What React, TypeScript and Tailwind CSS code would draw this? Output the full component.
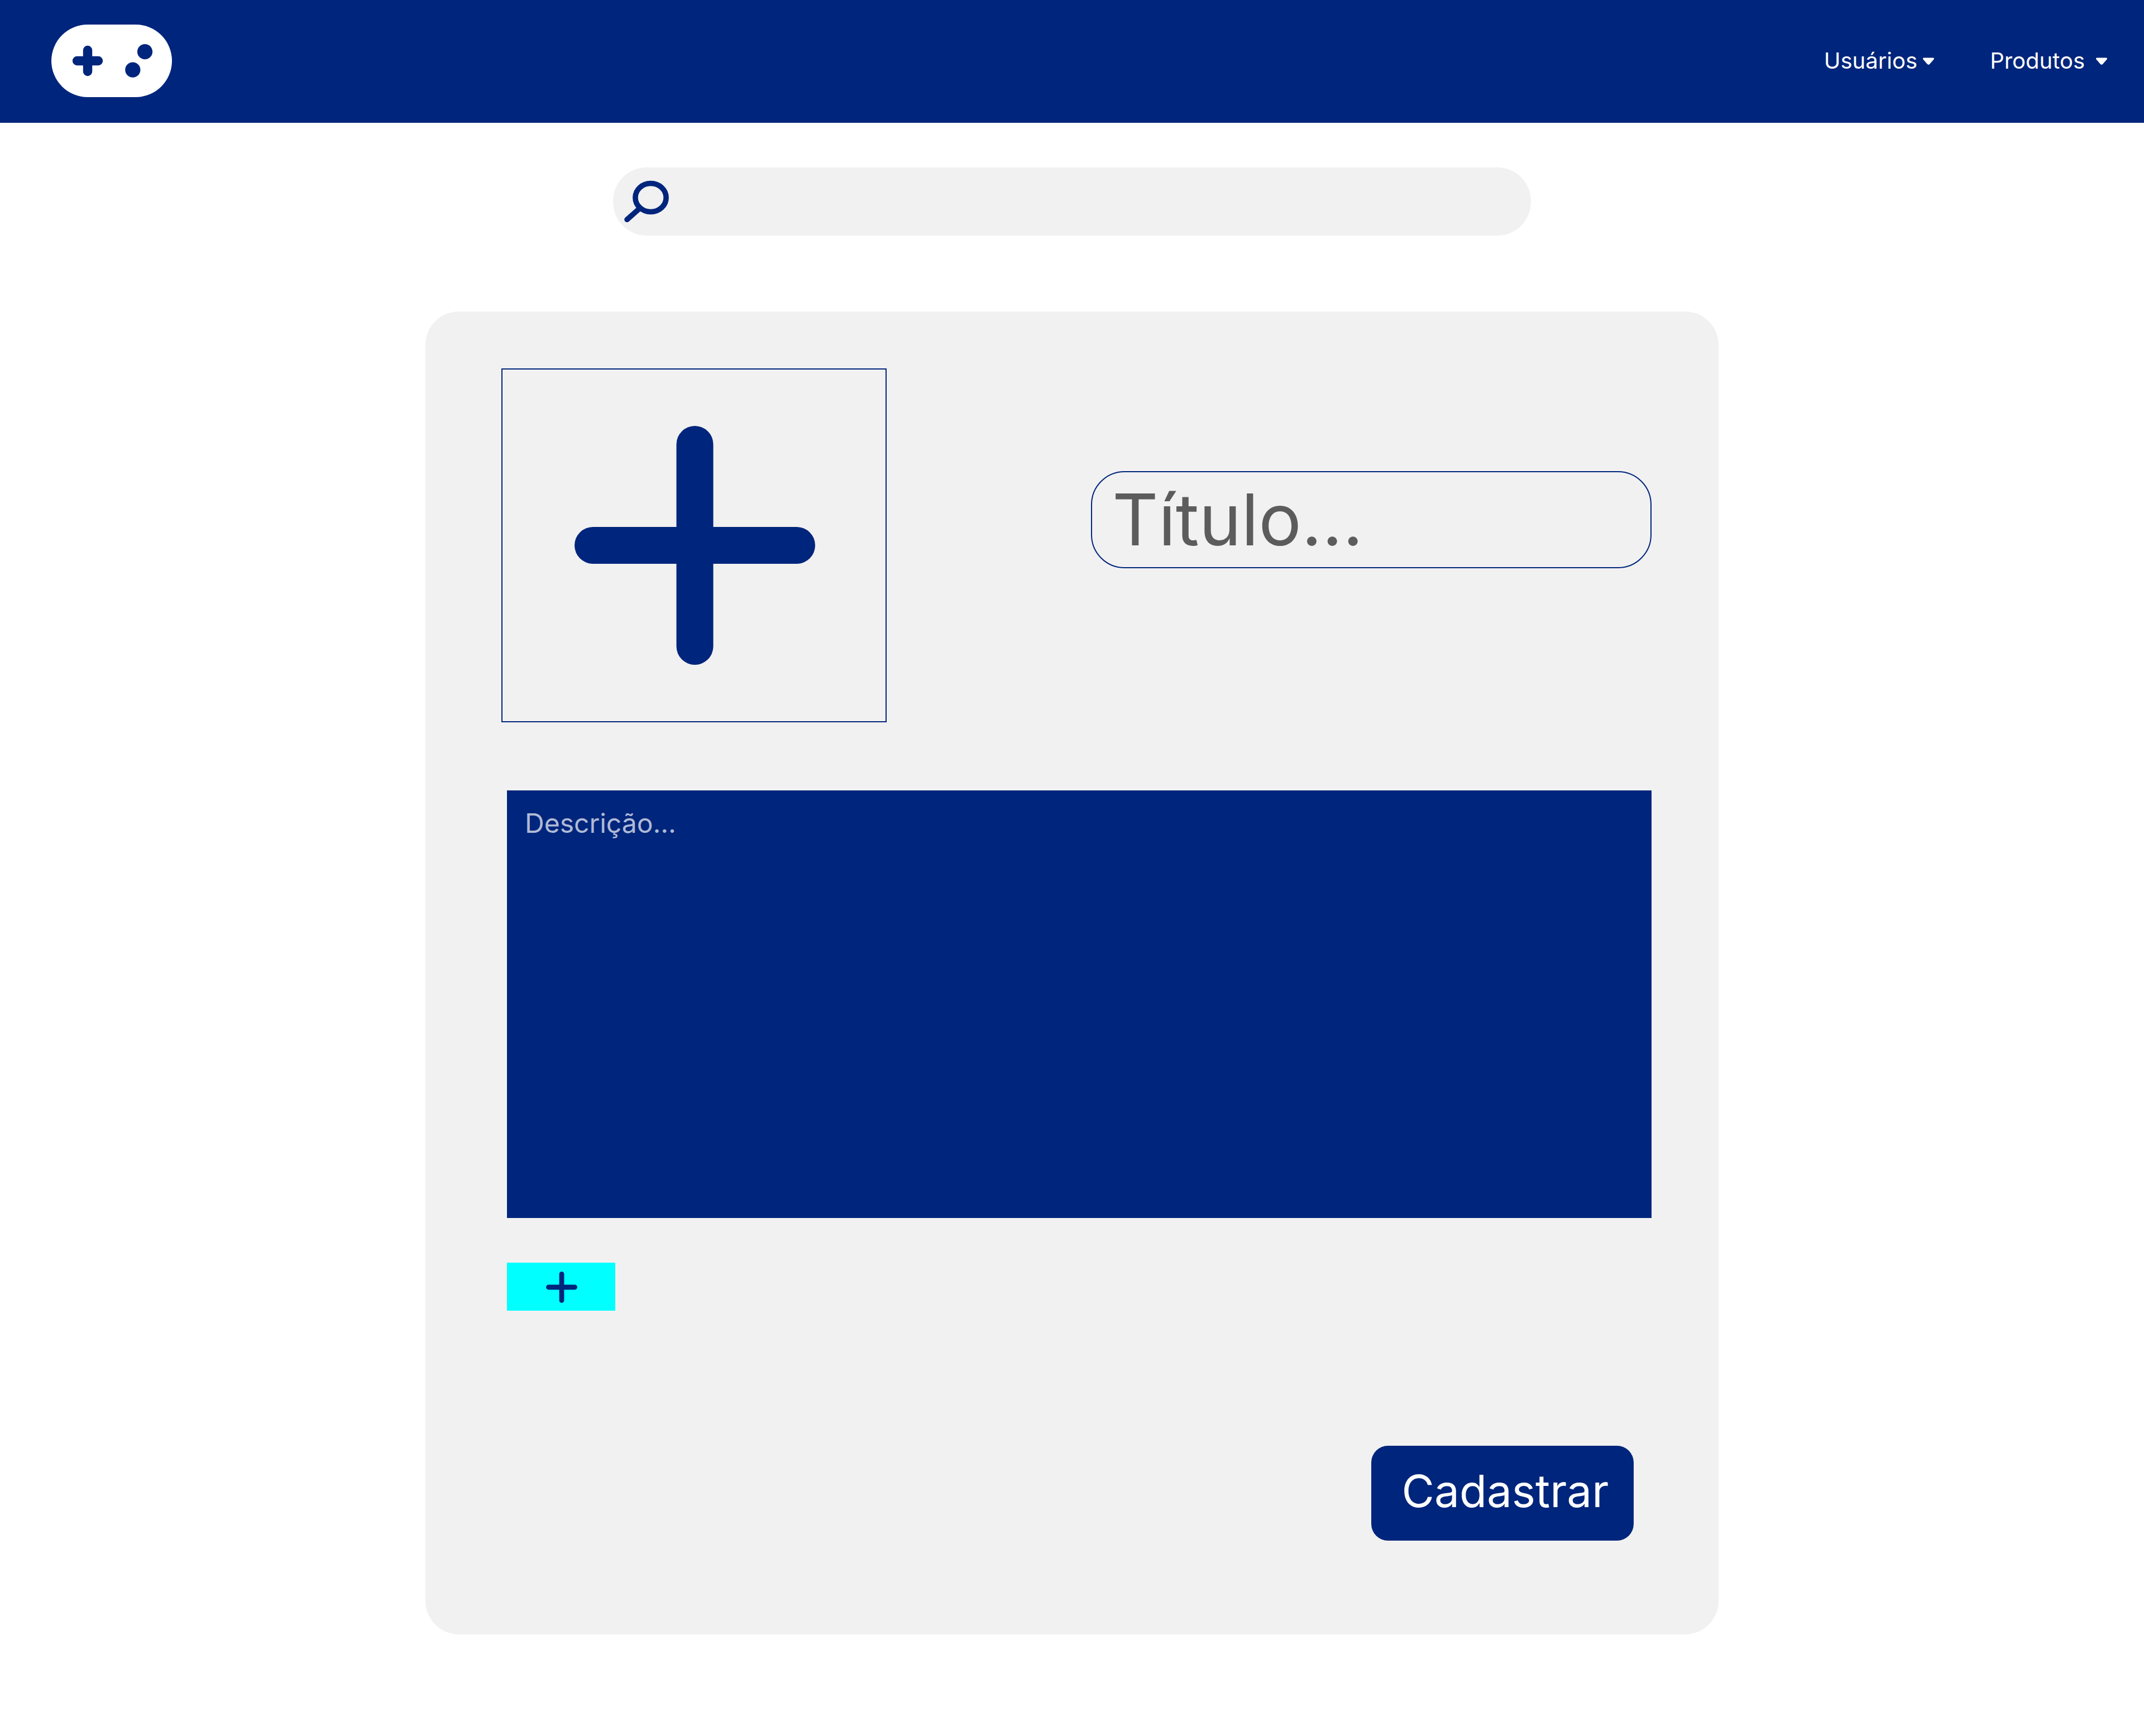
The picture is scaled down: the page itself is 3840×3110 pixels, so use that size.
import React from "react";

function GamepadLogo() {
  return (
    <svg className="h-[130px] w-[216px]" viewBox="0 0 216 130" aria-hidden="true">
      <rect width="216" height="130" rx="65" fill="#ffffff" />
      <path d="M46 65H84M65 46V84" stroke="#00257c" strokeWidth="16.4" strokeLinecap="round" />
      <circle cx="167.5" cy="48.7" r="13.6" fill="#00257c" />
      <circle cx="145.8" cy="81.2" r="13.6" fill="#00257c" />
    </svg>
  );
}

function Caret() {
  return (
    <svg className="h-4 w-5" viewBox="0 0 20 16" aria-hidden="true">
      <path
        d="M1.2 2.4H18.8Q20.2 2.8 19.8 5L12.2 13.8Q10 16 7.8 13.8L0.2 5Q-0.2 2.8 1.2 2.4Z"
        fill="#ffffff"
      />
    </svg>
  );
}

function SearchIcon() {
  return (
    <svg className="h-[76px] w-[82px] shrink-0" viewBox="0 0 82 76" fill="none" stroke="#00257c" aria-hidden="true">
      <ellipse cx="48.5" cy="32" rx="27.6" ry="25.5" strokeWidth="9.6" />
      <path d="M6 71.3L29 51" strokeWidth="9.6" strokeLinecap="round" />
    </svg>
  );
}

function LargePlus() {
  return (
    <svg className="h-[428px] w-[431px]" viewBox="0 0 431 428" fill="#00257c" aria-hidden="true">
      <rect x="182.5" width="66" height="428" rx="33" />
      <rect y="181" width="431" height="66" rx="33" />
    </svg>
  );
}

function SmallPlus() {
  return (
    <svg className="h-14 w-14" viewBox="0 0 56 56" stroke="#00257c" strokeWidth="8.8" strokeLinecap="round" aria-hidden="true">
      <path d="M28 4.4V51.6M4.4 28H51.6" />
    </svg>
  );
}

export default function App() {
  return (
    <div className="min-h-screen bg-white pb-[182px] font-['Inter',sans-serif]">
      <header className="flex h-[220px] items-center justify-between bg-[#00257c] pr-[66px] pb-0.5 pl-[92px]">
        <a href="#" aria-label="Início">
          <GamepadLogo />
        </a>
        <nav className="flex items-center gap-[100px] text-[40px] leading-[48px] text-white">
          <button type="button" className="flex items-center gap-2.5">
            Usuários
            <Caret />
          </button>
          <button type="button" className="flex items-center gap-5">
            Produtos
            <Caret />
          </button>
        </nav>
      </header>

      <main className="flex flex-col items-center">
        <label className="mt-20 flex h-[122px] w-full max-w-[1644px] items-center rounded-[60px] bg-[#f1f1f1] pr-10 pb-0.5 pl-[19px]">
          <SearchIcon />
          <input
            type="search"
            aria-label="Buscar"
            className="ml-6 w-full min-w-0 bg-transparent text-[48px] text-[#00257c] outline-none"
          />
        </label>

        <form className="mt-[136px] flex w-full max-w-[2316px] flex-col rounded-[60px] bg-[#f1f1f1] pt-[102px] pr-[120px] pb-[168px] pl-[136px]">
          <div className="flex items-start justify-between">
            <button
              type="button"
              aria-label="Adicionar imagem"
              className="flex h-[634px] w-[690px] items-center justify-center border-2 border-[#00257c] pl-0.5"
            >
              <LargePlus />
            </button>
            <input
              type="text"
              aria-label="Título"
              placeholder="Título..."
              className="mt-[184px] h-[174px] w-[1004px] rounded-[60px] border-2 border-[#00257c] bg-transparent px-9 text-[128px] text-[#5c5c5c] outline-none placeholder:text-[#5c5c5c]"
            />
          </div>

          <div className="mt-[122px] flex flex-col items-start pl-2.5">
            <textarea
              aria-label="Descrição"
              placeholder="Descrição..."
              className="h-[766px] w-full resize-none bg-[#00257c] px-8 py-[30px] text-[48px] leading-[58px] text-white outline-none placeholder:text-white/70"
            />
            <button
              type="button"
              aria-label="Adicionar item"
              className="mt-20 flex h-[86px] w-[194px] items-center justify-center bg-[#00ffff] pt-0.5 pl-0.5"
            >
              <SmallPlus />
            </button>
          </div>

          <button
            type="submit"
            className="mt-[242px] mr-8 h-[170px] w-[470px] self-end rounded-[30px] bg-[#00257c] pb-2 pl-2.5 text-[80px] leading-[96px] text-white"
          >
            Cadastrar
          </button>
        </form>
      </main>
    </div>
  );
}
